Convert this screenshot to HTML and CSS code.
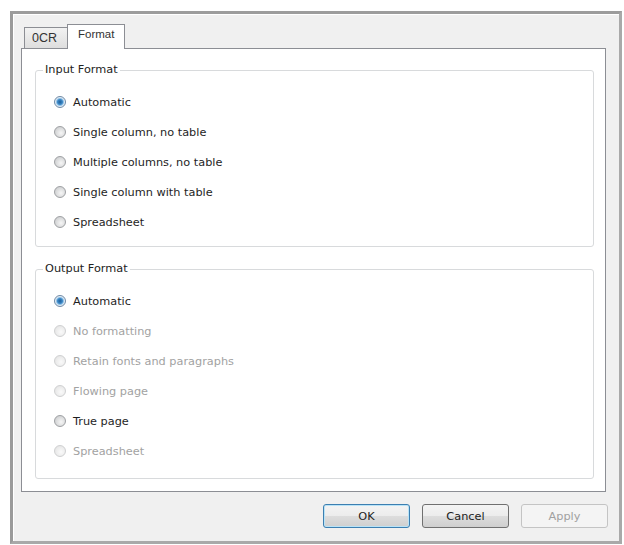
FILE: index.html
```html
<!DOCTYPE html>
<html lang="en">
<head>
    <meta charset="UTF-8">
    <title>OCR Options</title>
    <link rel="stylesheet" href="styles.css">
</head>
<body>

    <div class="dialog">
        <div class="tabs">
            <div class="tab">0CR</div>
            <div class="tab tab-active">Format</div>
        </div>

        <div class="panel">
            <fieldset class="group">
                <legend>Input Format</legend>
                <label class="option"><span class="radio checked"></span>Automatic</label>
                <label class="option"><span class="radio"></span>Single column, no table</label>
                <label class="option"><span class="radio"></span>Multiple columns, no table</label>
                <label class="option"><span class="radio"></span>Single column with table</label>
                <label class="option"><span class="radio"></span>Spreadsheet</label>
            </fieldset>

            <fieldset class="group group-output">
                <legend>Output Format</legend>
                <label class="option"><span class="radio checked"></span>Automatic</label>
                <label class="option disabled"><span class="radio"></span>No formatting</label>
                <label class="option disabled"><span class="radio"></span>Retain fonts and paragraphs</label>
                <label class="option disabled"><span class="radio"></span>Flowing page</label>
                <label class="option"><span class="radio"></span>True page</label>
                <label class="option disabled"><span class="radio"></span>Spreadsheet</label>
            </fieldset>
        </div>

        <div class="buttons">
            <button class="btn btn-default">OK</button>
            <button class="btn">Cancel</button>
            <button class="btn" disabled>Apply</button>
        </div>
    </div>

</body>
</html>
```

FILE: styles.css
```css
body { margin: 0; background: #fff; font-family: "DejaVu Sans", sans-serif; font-size: 11.3px; color: #222; }

.dialog { box-sizing: border-box; width: 612px; height: 533px; margin: 11px 0 0 10px; padding: 10px 0 0 8px; background: #f0f0f0; border: 3px solid #a9a9a9; border-top-color: #9c9c9c; border-left-color: #9a9a9a; box-shadow: inset 1px 1px 0 #fff; }

.tabs { display: flex; align-items: flex-end; height: 24px; padding-left: 3px; }
.tab { box-sizing: border-box; height: 21px; padding: 3px 10px 0 7px; border: 1px solid #8c8e94; border-bottom: none; background: linear-gradient(#f2f2f2, #dedede); color: #333; font-family: "Liberation Sans", sans-serif; font-size: 12.5px; }
.tab-active { position: relative; height: 25px; margin-bottom: -1px; margin-left: -1px; padding: 3px 10px 0 10px; background: #fff; font-size: 11.5px; z-index: 1; }

.panel { box-sizing: border-box; width: 585px; padding: 14px 11px 12px 13px; background: #fff; border: 1px solid #8c8e94; }

.group { margin: 0; padding: 10px 0 9px 0; border: 1px solid #d8dadc; border-radius: 3px; box-shadow: inset 1px 1px 0 #fff; }
.group legend { padding: 0 2px; margin-left: 7px; line-height: 14px; color: #222; }
.group-output { margin-top: 15px; padding-bottom: 12px; }

.option { display: flex; align-items: center; height: 30px; padding-left: 18px; color: #1e1e1e; }
.option.disabled { color: #a2a2a2; }

.radio { box-sizing: border-box; width: 12px; height: 12px; margin-right: 7px; border: 1px solid #9ea0a3; border-radius: 50%; background: radial-gradient(circle at 60% 60%, #f6f6f6, #dadbdc 55%, #c4c6c8); }
.option.disabled .radio { border-color: #cfd0d1; background: radial-gradient(circle at 60% 60%, #fafafa, #ececec 55%, #e0e0e0); }
.radio.checked { border-color: #6f8aa6; background: radial-gradient(circle, #1d5e9a 0, #3c88c6 2.5px, #8fc0e6 3.5px, #e3edf6 4.5px, #d8dde2 100%); }

.buttons { display: flex; justify-content: flex-end; gap: 12px; width: 587px; margin-top: 12px; }
.btn { box-sizing: border-box; width: 87px; height: 24px; border: 1px solid #707070; border-radius: 3px; background: linear-gradient(#f4f4f4 0, #ececec 50%, #dddddd 51%, #cfcfcf 100%); font-family: "DejaVu Sans", sans-serif; font-size: 11.3px; color: #222; }
.btn-default { border-color: #3c7fb1; box-shadow: inset 0 0 0 1px #b9e3f7; }
.btn:disabled { border-color: #c4c4c4; background: #f4f4f4; color: #a0a0a0; }
```
